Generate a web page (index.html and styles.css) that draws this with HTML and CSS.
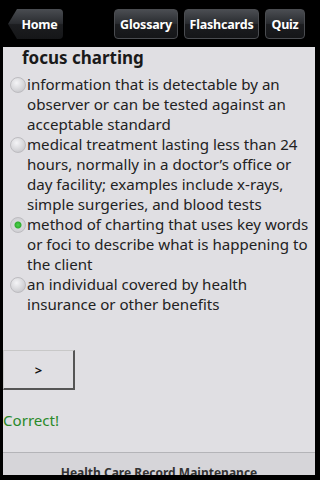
FILE: index.html
```html
<!DOCTYPE html>
<html>
<head>
<meta charset="utf-8">
<link rel="stylesheet" href="styles.css">
</head>
<body>
<div class="screen">
  <div class="header">
    <div class="btn home">Home</div>
    <div class="spacer"></div>
    <div class="btn w-gloss">Glossary</div>
    <div class="btn w-flash">Flashcards</div>
    <div class="btn w-quiz">Quiz</div>
  </div>
  <div class="panel">
    <div class="title">focus charting</div>
    <div class="options">
      <div class="opt"><span class="radio"></span><span class="txt">information that is detectable by an observer or can be tested against an acceptable standard</span></div>
      <div class="opt"><span class="radio"></span><span class="txt">medical treatment lasting less than 24 hours, normally in a doctor’s office or day facility; examples include x-rays, simple surgeries, and blood tests</span></div>
      <div class="opt"><span class="radio on"></span><span class="txt">method of charting that uses key words or foci to describe what is happening to the client</span></div>
      <div class="opt"><span class="radio"></span><span class="txt">an individual covered by health insurance or other benefits</span></div>
    </div>
    <div class="next">&gt;</div>
    <div class="result">Correct!</div>
    <div class="grow"></div>
    <div class="footer">Health Care Record Maintenance</div>
  </div>
</div>
</body>
</html>
```
FILE: styles.css
```css
html, body {
  margin: 0;
  padding: 0;
  background: #000;
}
.screen {
  width: 320px;
  height: 480px;
  display: flex;
  flex-direction: column;
  background: #000;
  font-family: "Noto Sans", "Open Sans", sans-serif;
  overflow: hidden;
}
.header {
  height: 47px;
  display: flex;
  align-items: flex-start;
  padding: 9px 15px 0 8px;
  box-sizing: border-box;
  gap: 6px;
}
.spacer { flex: 1; }
.btn {
  height: 30px;
  box-sizing: border-box;
  padding: 0;
  display: flex;
  align-items: center;
  justify-content: center;
  color: #fff;
  font-weight: bold;
  font-size: 12.5px;
  letter-spacing: -0.2px;
  border-radius: 4px;
  border: 1px solid #4a4c50;
  background: linear-gradient(#4a4d52, #2a2c30 48%, #1c1d20 52%, #151618);
}
.w-gloss { width: 64px; }
.w-flash { width: 75px; }
.w-quiz { width: 40px; }
.btn.home {
  width: 55px;
  padding-left: 8px;
  border: none;
  clip-path: polygon(0 50%, 9px 0, 100% 0, 100% 100%, 9px 100%);
}
.panel {
  flex: 1;
  margin: 0 5px 5px 3px;
  background: #e0dfe3;
  display: flex;
  flex-direction: column;
  overflow: hidden;
}
.title {
  font-weight: bold;
  font-size: 17px;
  color: #1a1a1a;
  padding-left: 19px;
  line-height: 22px;
}
.options {
  margin-top: 5px;
}
.opt {
  display: flex;
  align-items: flex-start;
}
.radio {
  width: 16px;
  height: 16px;
  border-radius: 50%;
  flex: none;
  margin: 3px 1px 0 7px;
  box-sizing: border-box;
  border: 1px solid #bdbcc0;
  background: radial-gradient(circle at 40% 35%, #f4f4f6, #cfcfd3 70%, #b8b8bc);
}
.radio.on {
  background: radial-gradient(circle, #4ed24e 0, #2fae2f 3px, #d8d8dc 4px, #c8c8cc 100%);
}
.txt {
  font-size: 15.1px;
  line-height: 20px;
  color: #222;
}
.next {
  margin-top: 36px;
  width: 72px;
  height: 40px;
  box-sizing: border-box;
  border: 1px solid #c8c8c8;
  border-right: 2px solid #555;
  border-bottom: 2px solid #555;
  display: flex;
  align-items: center;
  justify-content: center;
  font-size: 13px;
  font-weight: bold;
  color: #111;
}
.result {
  margin-top: 20px;
  font-size: 15.1px;
  color: #2a8a2a;
  line-height: 20px;
}
.grow { flex: 1; }
.footer {
  height: 23px;
  border-top: 1px solid #b4b4b8;
  background: #d6d5d9;
  text-align: center;
  font-size: 12px;
  font-weight: bold;
  color: #333;
  padding-top: 13px;
  box-sizing: border-box;
  line-height: 14px;
  white-space: nowrap;
}
```
